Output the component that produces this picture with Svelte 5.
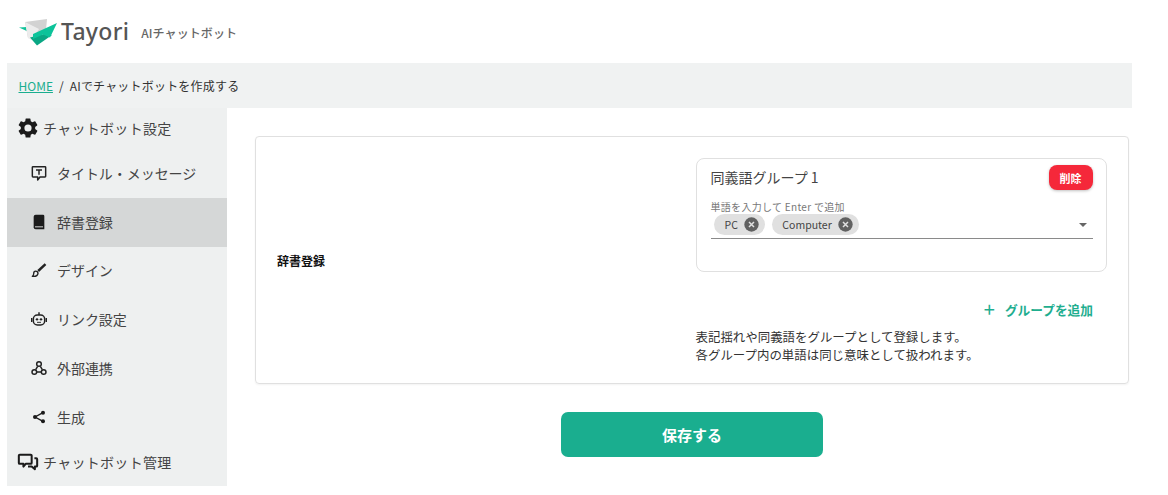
<script>
  const items = [
    { label: 'タイトル・メッセージ', icon: 'title' },
    { label: '辞書登録', icon: 'book', active: true },
    { label: 'デザイン', icon: 'brush' },
    { label: 'リンク設定', icon: 'robot' },
    { label: '外部連携', icon: 'hub' },
    { label: '生成', icon: 'share' }
  ];
</script>

<div class="page">
  <header class="top">
    <svg class="logo" width="38" height="28" viewBox="0 0 38 28">
      <path d="M0 9.500 L8 9 L10 14 Z" fill="#12c39a"/>
      <path d="M6 4 L28 1 L27 12 L14 21 L9 20 Z" fill="#d2d2d2"/>
      <path d="M6 4 L20 11 L13 22 L9 20 Z" fill="#ececec"/>
      <path d="M11 19.500 L25 16 L33 17 L18 27.500 Z" fill="#0aa784"/>
      <path d="M14 16 L38 5 L31 19.500 L24 16.500 L14 21 Z" fill="#0cc39a"/>
    </svg>
    <span class="word">Tayori</span>
    <span class="sub">AIチャットボット</span>
  </header>

  <nav class="crumb"><a href="#home">HOME</a><span class="sep">/</span><span class="cur">AIでチャットボットを作成する</span></nav>

  <div class="body">
    <aside class="side">
      <div class="head">
        <svg width="24" height="24" viewBox="0 0 24 24"><path fill="#1b1b1b" d="M19.14 12.94c.04-.3.06-.61.06-.94s-.02-.64-.07-.94l2.03-1.58a.5.5 0 0 0 .12-.61l-1.92-3.32a.5.5 0 0 0-.59-.22l-2.39.96a7 7 0 0 0-1.62-.94l-.36-2.54a.48.48 0 0 0-.48-.41h-3.84a.48.48 0 0 0-.47.41l-.36 2.54c-.59.24-1.13.57-1.62.94l-2.39-.96a.49.49 0 0 0-.59.22L2.74 8.87a.47.47 0 0 0 .12.61l2.03 1.58c-.05.3-.09.63-.09.94s.02.64.07.94l-2.03 1.58a.5.5 0 0 0-.12.61l1.92 3.32c.12.22.37.29.59.22l2.39-.96c.5.38 1.03.7 1.62.94l.36 2.54c.05.24.24.41.48.41h3.84c.24 0 .44-.17.47-.41l.36-2.54a7 7 0 0 0 1.62-.94l2.39.96c.22.08.47 0 .59-.22l1.92-3.32a.47.47 0 0 0-.12-.61zM12 15.6A3.6 3.6 0 1 1 12 8.4a3.6 3.6 0 0 1 0 7.2z"/></svg>
        <span>チャットボット設定</span>
      </div>
      <ul>
        {#each items as it}
          <li class:active={it.active}>
            <svg class="ico" width="16" height="16" viewBox="0 0 24 24">
              {#if it.icon === 'title'}
                <path fill="none" stroke="#222" stroke-width="2.200" stroke-linejoin="round" d="M3 2.500h18a1 1 0 0 1 1 1v13.500a1 1 0 0 1-1 1H13.500L10 22.500V18H3a1 1 0 0 1-1-1V3.500a1 1 0 0 1 1-1z"/>
                <path fill="none" stroke="#222" stroke-width="2.200" d="M7.500 7.500h9M12 7.500v7"/>
              {:else if it.icon === 'book'}
                <path fill="#1b1b1b" d="M7 1h11a2 2 0 0 1 2 2v20H7a3 3 0 0 1-3-3V4a3 3 0 0 1 3-3z"/>
                <path fill="#d5d7d7" d="M6 18.500h12v1.500H6z"/>
              {:else if it.icon === 'brush'}
                <path fill="none" stroke="#222" stroke-width="2" stroke-linejoin="round" d="M2 21.500c3 .3 8-.3 8.500-4.500a3.500 3.500 0 0 0-3.500-3.200c-2.500 0-3 2-3 3.800 0 1.800-.7 3-2 3.900z"/>
                <path fill="#222" d="M9.500 12 20.500 2l2.500 2.500L12 15z"/>
              {:else if it.icon === 'robot'}
                <rect x="3.500" y="6" width="17" height="15" rx="6" fill="none" stroke="#222" stroke-width="2.200"/>
                <circle cx="9" cy="12.500" r="1.800" fill="#222"/><circle cx="15" cy="12.500" r="1.800" fill="#222"/>
                <path d="M9 17h6" stroke="#222" stroke-width="1.400"/>
                <path d="M12 2v4M1 10.500v6M23 10.500v6" stroke="#222" stroke-width="2.200" fill="none"/>
              {:else if it.icon === 'hub'}
                <g fill="none" stroke="#222" stroke-width="2.200">
                  <circle cx="12" cy="6" r="3.500"/><circle cx="5" cy="18" r="3.500"/><circle cx="19" cy="18" r="3.500"/>
                  <path d="M10 9.500 7 14.500M14 9.500l3 5M8.500 18h7"/>
                </g>
              {:else}
                <g fill="#1b1b1b"><circle cx="18" cy="5.500" r="3"/><circle cx="6" cy="12" r="3"/><circle cx="18" cy="18.500" r="3"/></g>
                <path d="M18 5.500 6 12l12 6.500" fill="none" stroke="#1b1b1b" stroke-width="2"/>
              {/if}
            </svg>
            <span>{it.label}</span>
          </li>
        {/each}
      </ul>
      <div class="head last">
        <svg width="22" height="22" viewBox="0 0 24 24" fill="none" stroke="#1b1b1b" stroke-width="2.200" stroke-linejoin="round"><path d="M3 4h12a1 1 0 0 1 1 1v8a1 1 0 0 1-1 1H9.500L7 17v-3H3a1 1 0 0 1-1-1V5a1 1 0 0 1 1-1z"/><path d="M19 8h2a1 1 0 0 1 1 1v7a1 1 0 0 1-1 1h-1.500v3L16 17h-4"/></svg>
        <span>チャットボット管理</span>
      </div>
    </aside>

    <main class="main">
      <section class="card">
        <div class="label">辞書登録</div>
        <div class="right">
          <div class="group">
            <div class="group-head">
              <span class="gt">同義語グループ 1</span>
              <button class="del">削除</button>
            </div>
            <div class="field">
              <div class="flabel">単語を入力して Enter で追加</div>
              <div class="chips">
                <span class="chip pc">PC
                  <svg width="15" height="15" viewBox="0 0 24 24"><circle cx="12" cy="12" r="11.500" fill="#616161"/><path d="M8 8l8 8M16 8l-8 8" stroke="#e0e0e0" stroke-width="2.400"/></svg>
                </span>
                <span class="chip">Computer
                  <svg width="15" height="15" viewBox="0 0 24 24"><circle cx="12" cy="12" r="11.500" fill="#616161"/><path d="M8 8l8 8M16 8l-8 8" stroke="#e0e0e0" stroke-width="2.400"/></svg>
                </span>
                <span class="caret"></span>
              </div>
            </div>
          </div>
          <div class="add-row">
            <button class="add"><span class="plus">+</span>グループを追加</button>
          </div>
          <p class="note">表記揺れや同義語をグループとして登録します。<br />各グループ内の単語は同じ意味として扱われます。</p>
        </div>
      </section>
      <div class="save-row"><button class="save">保存する</button></div>
    </main>
  </div>
</div>

<style>
  :global(body) {
    margin: 0;
    background: #fff;
  }
  .page {
    width: 1125px;
    height: 495px;
    margin-left: 7px;
    overflow: hidden;
    font-family: "Noto Sans CJK JP", "Noto Sans", sans-serif;
    color: #333;
  }
  .top {
    height: 63px;
    display: flex;
    align-items: center;
    padding-left: 12px;
    box-sizing: border-box;
  }
  .logo { margin-right: 4px; }
  .word {
    font-family: "Noto Sans", sans-serif;
    font-size: 23px;
    font-weight: 500;
    letter-spacing: .3px;
    color: #555;
    margin-right: 12px;
    line-height: 1;
  }
  .sub { font-size: 12px; color: #666; font-weight: 500; letter-spacing: .1px; margin-top: 1px; }
  .crumb {
    height: 45px;
    background: #f0f2f2;
    display: flex;
    align-items: center;
    padding: 0 0 1px 11.500px;
    box-sizing: border-box;
    font-size: 12px;
    color: #333;
  }
  .crumb a { color: #1aae8f; text-decoration: underline; }
  .sep { margin: 0 6px; }
  .cur { letter-spacing: .2px; }
  .body { display: flex; }
  .side {
    width: 220px;
    height: 378px;
    background: #eef0f0;
    flex: none;
  }
  .head {
    height: 42px;
    display: flex;
    align-items: center;
    padding: 0 0 2px 9px;
    box-sizing: border-box;
    gap: 4px;
    font-size: 14px;
    color: #444;
    letter-spacing: .3px;
  }
  .head > span { margin-left: -1px; }
  .head svg { flex: none; }
  .head.last { height: 44px; padding: 0 0 4px 10px; gap: 5px; }
  ul { list-style: none; margin: -1px 0 0; padding: 0; }
  li {
    height: 48.800px;
    box-sizing: border-box;
    display: flex;
    align-items: center;
    padding: 0 0 1px 24px;
    gap: 10px;
    font-size: 14px;
    color: #444;
    letter-spacing: -.05px;
  }
  li.active { background: #d5d7d7; }
  .ico { flex: none; }
  .main { flex: 1; padding: 28px 3px 0 28px; min-width: 0; }
  .card {
    height: 248px;
    box-sizing: border-box;
    border: 1px solid #e0e0e0;
    border-radius: 4px;
    box-shadow: 0 1px 2px rgba(0,0,0,.05);
    display: flex;
  }
  .label {
    width: 439.500px;
    flex: none;
    box-sizing: border-box;
    padding-left: 21px;
    align-self: center;
    font-size: 12px;
    font-weight: 700;
    color: #111;
  }
  .right { flex: 1; padding: 20.500px 21px 0 0; min-width: 0; }
  .group {
    height: 114px;
    box-sizing: border-box;
    border: 1px solid #e0e0e0;
    border-radius: 8px;
    padding: 6px 13.500px 0 14px;
  }
  .group-head { display: flex; justify-content: space-between; align-items: center; height: 26px; }
  .gt { font-size: 14px; color: #444; margin-top: -1px; }
  .del {
    width: 44px;
    height: 25px;
    border: 0;
    border-radius: 8px;
    background: #f5283a;
    color: #fff;
    font: 700 11px "Noto Sans CJK JP", sans-serif;
    box-shadow: 0 1px 3px rgba(0,0,0,.25);
    padding: 0;
  }
  .field { margin-top: 10px; border-bottom: 1px solid #8a8a8a; height: 38.500px; box-sizing: border-box; }
  .flabel { font-size: 10px; line-height: 12px; color: #777; letter-spacing: .3px; }
  .chips { display: flex; align-items: center; gap: 7px; padding-left: 3.500px; height: 21px; position: relative; margin-top: 1px; }
  .chip {
    height: 21px;
    border-radius: 11px;
    background: #e0e0e0;
    display: inline-flex;
    align-items: center;
    padding: 0 6px 0 10.500px;
    font-size: 10.500px;
    color: #444;
    gap: 6px;
  }
  .caret {
    position: absolute;
    right: 6px;
    top: 9px;
    border-left: 4.500px solid transparent;
    border-right: 4.500px solid transparent;
    border-top: 4.500px solid #666;
  }
  .add-row { display: flex; justify-content: flex-end; margin-top: 27.500px; padding-right: 14px; }
  .add {
    border: 0;
    background: none;
    padding: 0;
    color: #1fae8f;
    font: 700 12.700px "Noto Sans CJK JP", sans-serif;
    display: flex;
    align-items: center;
  }
  .plus { font-size: 20px; font-weight: 400; line-height: 1; margin-right: 10px; }
  .note { margin: 10px 0 0; font-size: 12.450px; line-height: 17.500px; color: #333; }
  .save-row { padding-left: 306px; margin-top: 28px; }
  .save {
    width: 262px;
    height: 45px;
    border: 0;
    border-radius: 7px;
    background: #1aae8f;
    color: #fff;
    font: 700 15px "Noto Sans CJK JP", sans-serif;
  }
</style>
